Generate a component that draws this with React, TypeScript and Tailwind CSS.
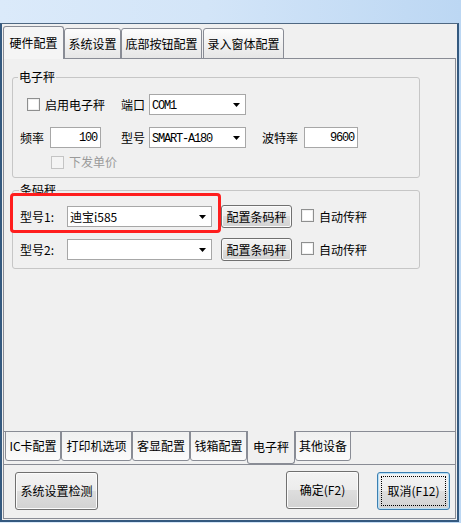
import React from "react";

const MONO = "font-['Liberation_Mono',monospace] text-[12px] tracking-[-1.2px]";

function Checkbox({ disabled = false }: { disabled?: boolean }) {
  return (
    <span
      className={`inline-block w-[13px] h-[13px] shrink-0 border ${
        disabled
          ? "border-[#c4c4c4] bg-[#f4f4f4]"
          : "border-[#8e8f8f] bg-white shadow-[inset_0_0_0_1px_#f0f0f0]"
      }`}
    />
  );
}

function Arrow() {
  return (
    <div className="w-[17px] h-full flex items-center justify-center shrink-0">
      <svg width="7" height="4" viewBox="0 0 7 4">
        <path d="M0 0H7L3.5 4Z" fill="#000" />
      </svg>
    </div>
  );
}

function Combo({ w, children }: { w: string; children?: React.ReactNode }) {
  return (
    <div className={`flex items-center h-[21px] ${w} border border-[#a7a7a7] bg-white shrink-0`}>
      <div className="flex-1 pl-[2px] whitespace-nowrap leading-[16px]">{children}</div>
      <Arrow />
    </div>
  );
}

function NumBox({ w, value }: { w: string; value: string }) {
  return (
    <div className={`flex items-center justify-end h-[21px] ${w} border border-[#a7a7a7] bg-white pr-[3px] shrink-0 ${MONO}`}>
      {value}
    </div>
  );
}

function Btn({ className = "", children, focused = false }: { className?: string; children: React.ReactNode; focused?: boolean }) {
  return (
    <div
      className={`relative flex items-center justify-center rounded-[3px] border ${
        focused ? "border-[#3c7fb1] shadow-[inset_0_0_0_1px_#b8e0f7]" : "border-[#707070] shadow-[inset_0_0_0_1px_#fbfbfb]"
      } bg-[linear-gradient(to_bottom,#f3f3f3_0%,#ececec_50%,#dedede_50%,#d2d2d2_100%)] whitespace-nowrap shrink-0 ${className}`}
    >
      {focused && <span className="absolute inset-[3px] border border-dotted border-black" />}
      <span className="relative">{children}</span>
    </div>
  );
}

function TopTab({ label, w, selected = false, extra = "" }: { label: string; w: string; selected?: boolean; extra?: string }) {
  return (
    <div
      className={`${w} ${extra} flex items-center justify-center border-x border-t border-[#898c95] rounded-t-[3px] ${
        selected
          ? "h-[33px] bg-[#f5f5f5] border-b-0"
          : "h-[31px] border-b bg-[linear-gradient(to_bottom,#fdfdfd,#e6e6e6)]"
      }`}
    >
      {label}
    </div>
  );
}

function BottomTab({ label, w, selected = false }: { label: string; w: string; selected?: boolean }) {
  return (
    <div
      className={`${w} flex items-center justify-center border-x border-b border-[#898c95] rounded-b-[3px] shrink-0 ${
        selected ? "h-[33px] bg-[#f0f0f0] border-t-0" : "h-[30px] border-t bg-[linear-gradient(to_bottom,#f0f0f0,#fbfbfb)]"
      }`}
    >
      {label}
    </div>
  );
}

export default function App() {
  return (
    <div className="w-[461px] h-[523px] overflow-hidden bg-[linear-gradient(90deg,#dbeafa_0%,#d3e5f8_45%,#bcd7f3_100%)] font-['Noto_Sans_CJK_SC',sans-serif] text-[12px] leading-[14px] text-black">
      <div className="mt-[23px] w-[459px] h-[499px] border-t border-t-[#4f6882] border-x-2 border-x-[#34597f] border-b-2 border-b-[#34597f] bg-[#f0f0f0] flex flex-col">
        <div className="ml-[1px] mt-[2px] w-[453px] flex flex-col">
          {/* top tabs */}
          <div className="relative z-10 flex items-end h-[33px] -mb-px">
            <TopTab label="硬件配置" w="w-[61px]" selected />
            <TopTab label="系统设置" w="w-[57px]" />
            <TopTab label="底部按钮配置" w="w-[81px]" />
            <TopTab label="录入窗体配置" w="w-[81px]" extra="ml-[1px]" />
          </div>

          {/* outer panel */}
          <div className="h-[407px] border border-[#898c95] flex flex-col">
            {/* inner page */}
            <div className="h-[373px] border-b border-[#898c95] flex flex-col">
              {/* group 1 */}
              <div className="ml-[8px] mt-[11px] w-[408px]">
                <fieldset className="border border-[#c6c6c6] rounded-[3px] pb-[8px]">
                  <legend className="ml-[5px] px-px leading-[14px]">电子秤</legend>
                  <div className="mt-[10px] h-[21px] flex items-center pl-[14px]">
                    <Checkbox />
                    <span className="ml-[5px]">启用电子秤</span>
                    <span className="ml-[16px]">端口</span>
                    <div className="ml-[4px]">
                      <Combo w="w-[97px]">
                        <span className={MONO}>COM1</span>
                      </Combo>
                    </div>
                  </div>
                  <div className="mt-[12px] h-[21px] flex items-center pl-[7px]">
                    <span>频率</span>
                    <div className="ml-[6px]">
                      <NumBox w="w-[51px]" value="100" />
                    </div>
                    <span className="ml-[20px]">型号</span>
                    <div className="ml-[4px]">
                      <Combo w="w-[97px]">
                        <span className={MONO}>SMART-A180</span>
                      </Combo>
                    </div>
                    <span className="ml-[16px]">波特率</span>
                    <div className="ml-[6px]">
                      <NumBox w="w-[54px]" value="9600" />
                    </div>
                  </div>
                  <div className="mt-[7px] h-[14px] flex items-center pl-[38px]">
                    <Checkbox disabled />
                    <span className="ml-[5px] text-[#9a9a9a]">下发单价</span>
                  </div>
                </fieldset>
              </div>

              {/* group 2 */}
              <div className="relative ml-[8px] mt-[5px] w-[408px]">
                <fieldset className="border border-[#c6c6c6] rounded-[3px] pb-[7px]">
                  <legend className="ml-[6px] px-px leading-[14px]">条码秤</legend>
                  <div className="mt-[8px] h-[23px] flex items-center pl-[7px]">
                    <span className="w-[47px] shrink-0">型号1:</span>
                    <Combo w="w-[145px]">
                      <span>迪宝i585</span>
                    </Combo>
                    <Btn className="ml-[9px] w-[71px] h-[23px]">配置条码秤</Btn>
                    <div className="ml-[9px]">
                      <Checkbox />
                    </div>
                    <span className="ml-[5px]">自动传秤</span>
                  </div>
                  <div className="mt-[10px] h-[23px] flex items-center pl-[7px]">
                    <span className="w-[47px] shrink-0">型号2:</span>
                    <Combo w="w-[145px]" />
                    <Btn className="ml-[9px] w-[71px] h-[23px]">配置条码秤</Btn>
                    <div className="ml-[9px]">
                      <Checkbox />
                    </div>
                    <span className="ml-[5px]">自动传秤</span>
                  </div>
                </fieldset>
                <div className="absolute left-[-2px] top-[10px] w-[211px] h-[40px] border-[3px] border-[#ff1e1e] rounded-[4px] pointer-events-none" />
              </div>
            </div>

            {/* bottom tabs */}
            <div className="relative z-10 -mt-px ml-[1px] flex items-start">
              <BottomTab label="IC卡配置" w="w-[56px]" />
              <BottomTab label="打印机选项" w="w-[71px]" />
              <BottomTab label="客显配置" w="w-[58px]" />
              <BottomTab label="钱箱配置" w="w-[57px]" />
              <BottomTab label="电子秤" w="w-[48px]" selected />
              <BottomTab label="其他设备" w="w-[56px]" />
            </div>
          </div>

          {/* bottom button box */}
          <div className="h-[54px] border-x border-b border-[#898c95] flex items-start pr-[5px]">
            <Btn className="ml-[11px] mt-[7px] w-[83px] h-[38px]">系统设置检测</Btn>
            <Btn className="ml-auto mt-[6px] w-[73px] h-[38px]">确定(F2)</Btn>
            <Btn className="ml-[18px] mt-[7px] w-[73px] h-[38px]" focused>
              取消(F12)
            </Btn>
          </div>
        </div>
      </div>
    </div>
  );
}
